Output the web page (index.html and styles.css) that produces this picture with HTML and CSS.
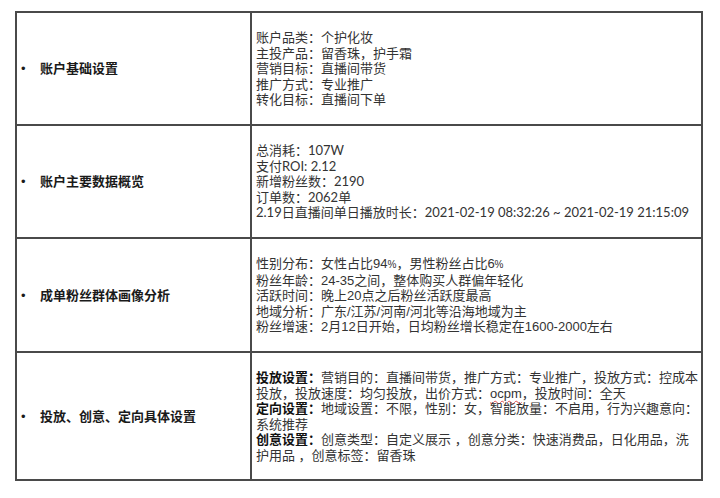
FILE: index.html
```html
<!DOCTYPE html>
<html lang="zh-CN">
<head>
<meta charset="utf-8">
<link rel="stylesheet" href="styles.css">
</head>
<body>
<div class="page">
<table class="grid">
  <tr>
    <td class="label"><span class="dot">•</span><span>账户基础设置</span></td>
    <td class="info">
      <div>账户品类：个护化妆</div>
      <div>主投产品：留香珠，护手霜</div>
      <div>营销目标：直播间带货</div>
      <div>推广方式：专业推广</div>
      <div>转化目标：直播间下单</div>
    </td>
  </tr>
  <tr>
    <td class="label"><span class="dot">•</span><span>账户主要数据概览</span></td>
    <td class="info lato">
      <div>总消耗：107W</div>
      <div>支付ROI: 2.12</div>
      <div>新增粉丝数：2190</div>
      <div>订单数：2062单</div>
      <div>2.19日直播间单日播放时长：2021-02-19 08:32:26 ~ 2021-02-19 21:15:09</div>
    </td>
  </tr>
  <tr>
    <td class="label"><span class="dot">•</span><span>成单粉丝群体画像分析</span></td>
    <td class="info">
      <div>性别分布：女性占比94<span class="pct">%</span>，男性粉丝占比6<span class="pct">%</span></div>
      <div>粉丝年龄：24-35之间，整体购买人群偏年轻化</div>
      <div>活跃时间：晚上20点之后粉丝活跃度最高</div>
      <div>地域分析：广东/江苏/河南/河北等沿海地域为主</div>
      <div>粉丝增速：2月12日开始，日均粉丝增长稳定在1600-2000左右</div>
    </td>
  </tr>
  <tr>
    <td class="label"><span class="dot">•</span><span>投放、创意、定向具体设置</span></td>
    <td class="info">
      <div><b>投放设置：</b>营销目的：直播间带货，推广方式：专业推广，投放方式：控成本投放，投放速度：均匀投放，出价方式：<span class="spell">ocpm</span>，投放时间：全天</div>
      <div><b>定向设置：</b>地域设置：不限，性别：女，智能放量：不启用，行为兴趣意向：系统推荐</div>
      <div><b>创意设置：</b>创意类型：自定义展示 ，创意分类：快速消费品，日化用品，洗护用品 ，创意标签：留香珠</div>
    </td>
  </tr>
</table>
</div>
</body>
</html>
```

FILE: styles.css
```css
html, body {
  margin: 0;
  padding: 0;
  background: #ffffff;
}

.page {
  padding: 11px 0 0 15px;
}

.grid {
  border-collapse: collapse;
  width: 688px;
  table-layout: fixed;
  font-family: "Liberation Sans", "Noto Sans CJK SC", sans-serif;
  font-size: 13px;
  line-height: 15.6px;
  color: #333333;
}

.grid td {
  border: 2px solid #4a4a4a;
  vertical-align: middle;
  padding: 17px 0 16px 4px;
}

.grid td.label {
  width: 229px;
  padding-left: 4px;
  font-weight: bold;
  color: #1a1a1a;
}

.dot {
  display: inline-block;
  width: 19px;
  font-weight: normal;
}

.info b {
  color: #111111;
}

.lato {
  font-family: Lato, "Noto Sans CJK SC", sans-serif;
}

.pct {
  font-size: 10px;
}

.spell {
  text-decoration: underline wavy #e05050;
  text-decoration-thickness: 1px;
  text-underline-offset: 2px;
}
```
